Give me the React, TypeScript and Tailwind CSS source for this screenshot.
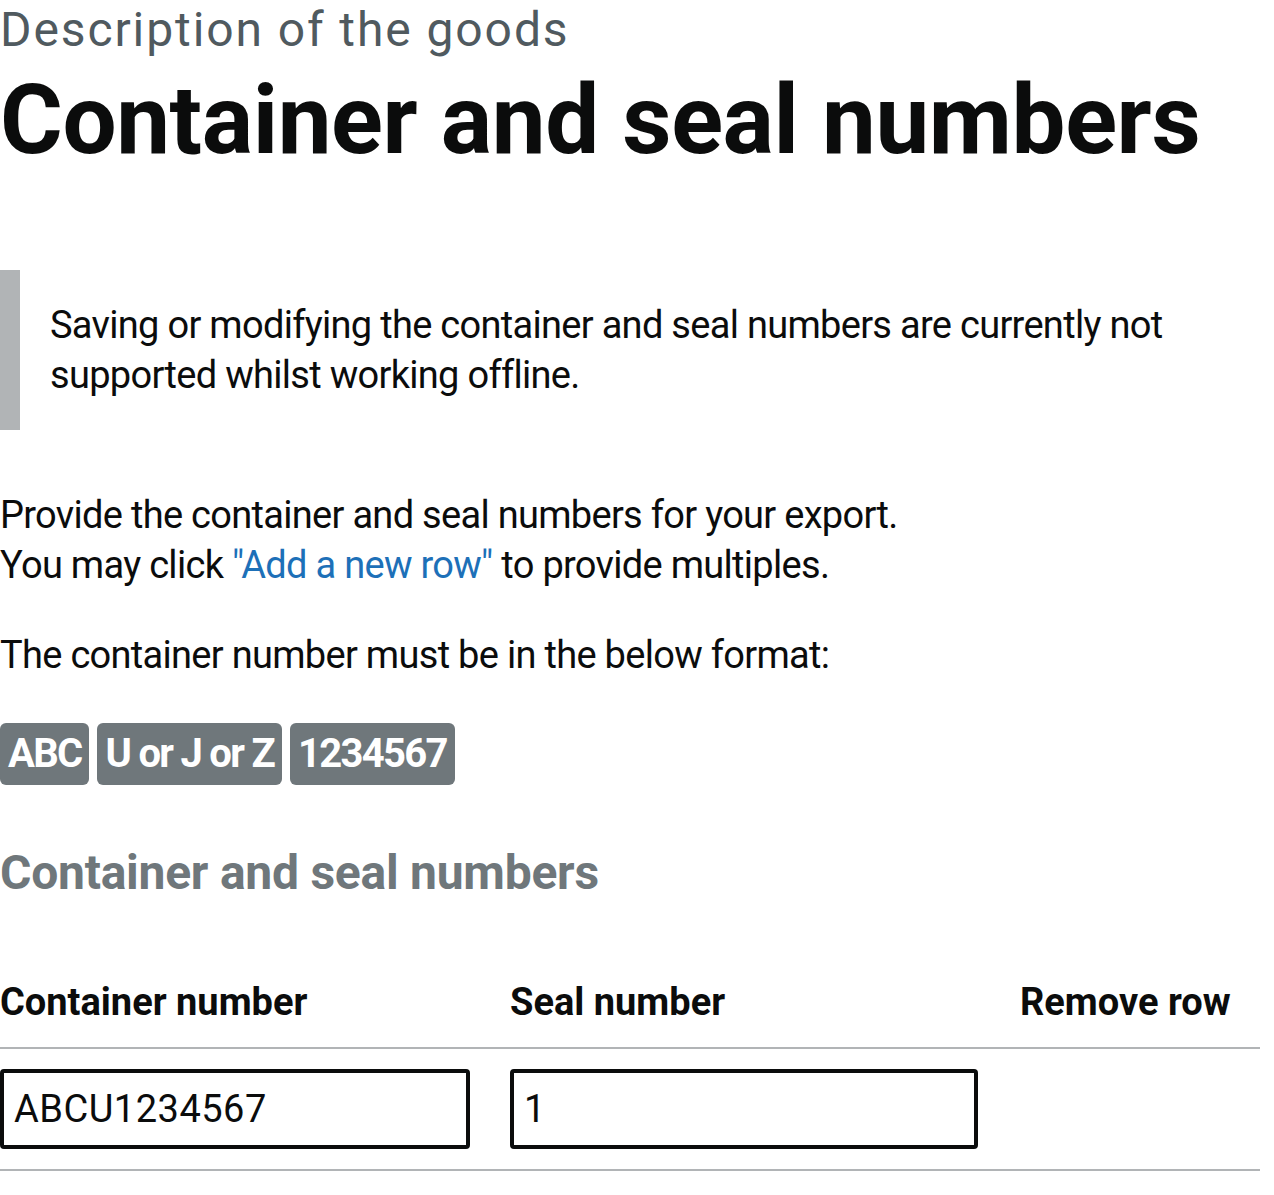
import React from "react";

const tags = ["ABC", "U or J or Z", "1234567"];

function FormatTag({ label }: { label: string }) {
  return (
    <span className="inline-flex h-[62px] items-center rounded-[6px] bg-[#6f777b] px-[8px] text-[40px] font-bold leading-none tracking-[-1.7px] text-white">
      {label}
    </span>
  );
}

export default function App() {
  return (
    <main className="w-[1260px] font-['Roboto',sans-serif] text-[#0b0c0c]">
      {/* Page heading */}
      <span className="block text-[48px] leading-[60px] text-[#505a5f] tracking-[1.9px]">Description of the goods</span>
      <h1 className="mt-[10px] mb-[100px] text-[96px] font-bold leading-[100px] tracking-[-0.4px]">
        Container and seal numbers
      </h1>

      {/* Offline notice */}
      <div className="mb-[60px] border-l-[20px] border-[#b1b4b6] py-[30px] pr-[30px] pl-[30px] text-[38px] leading-[50px] tracking-[-0.7px]">
        Saving or modifying the container and seal numbers are currently not supported whilst working offline.
      </div>

      <div className="text-[38px] leading-[50px] tracking-[-0.7px]">
        <p className="mb-[40px]">
          Provide the container and seal numbers for your export.
          <br />
          You may click{" "}
          <a href="#add-row" className="text-[#1d70b8]">
            "Add a new row"
          </a>{" "}
          to provide multiples.
        </p>
        <p className="mb-[43px]">The container number must be in the below format:</p>
      </div>

      <div className="flex gap-[8px]">
        {tags.map((t) => (
          <FormatTag key={t} label={t} />
        ))}
      </div>

      <h2 className="mt-[58px] mb-[54px] text-[48px] font-bold leading-[60px] tracking-[-0.25px] text-[#6f777b]">
        Container and seal numbers
      </h2>

      {/* Container table */}
      <table className="w-[1260px] border-collapse text-[38px] leading-[50px]">
        <thead>
          <tr className="border-b-2 border-[#b1b4b6]">
            <th className="w-[510px] py-[20px] pr-[40px] text-left font-bold">Container number</th>
            <th className="w-[510px] py-[20px] pr-[40px] text-left font-bold">Seal number</th>
            <th className="py-[20px] text-left font-bold">Remove row</th>
          </tr>
        </thead>
        <tbody>
          <tr className="border-b-2 border-[#b1b4b6]">
            <td className="py-[20px] pr-[40px]">
              <input
                defaultValue="ABCU1234567"
                className="block h-[80px] w-[470px] rounded-[4px] border-4 border-[#0b0c0c] px-[10px] text-[38px] tracking-[0.5px] outline-none"
              />
            </td>
            <td className="py-[20px] pr-[40px]">
              <input
                defaultValue="1"
                className="block h-[80px] w-[468px] rounded-[4px] border-4 border-[#0b0c0c] px-[10px] text-[38px] tracking-[0.5px] outline-none"
              />
            </td>
            <td className="py-[20px]"></td>
          </tr>
        </tbody>
      </table>
    </main>
  );
}
